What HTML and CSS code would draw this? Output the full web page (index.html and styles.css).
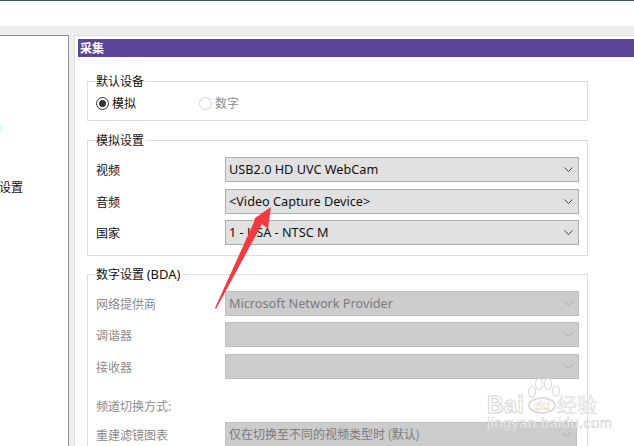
FILE: index.html
```html
<!DOCTYPE html>
<html lang="zh">
<head>
<meta charset="utf-8">
<title>采集</title>
<link rel="stylesheet" href="styles.css">
</head>
<body>
<div class="page">
  <div class="topbar"></div>
  <div class="workspace">
    <aside class="nav">
      <div class="nav-mark"></div>
      <div class="nav-item">设置</div>
    </aside>
    <main class="panel">
      <h1 class="title">采集</h1>
      <fieldset class="group group-device">
        <legend>默认设备</legend>
        <div class="radios">
          <span class="radio-item"><span class="radio checked"></span>模拟</span>
          <span class="radio-item off"><span class="radio"></span>数字</span>
        </div>
      </fieldset>
      <fieldset class="group group-analog">
        <legend>模拟设置</legend>
        <div class="row"><span class="label">视频</span><div class="select">USB2.0 HD UVC WebCam<svg class="chev" viewBox="0 0 9 5"><path d="M.5.5l4 4 4-4"/></svg></div></div>
        <div class="row"><span class="label">音频</span><div class="select">&lt;Video Capture Device&gt;<svg class="chev" viewBox="0 0 9 5"><path d="M.5.5l4 4 4-4"/></svg></div></div>
        <div class="row"><span class="label">国家</span><div class="select">1 - USA - NTSC M<svg class="chev" viewBox="0 0 9 5"><path d="M.5.5l4 4 4-4"/></svg></div></div>
      </fieldset>
      <fieldset class="group group-digital">
        <legend>数字设置 <span class="latin">(BDA)</span></legend>
        <div class="row off"><span class="label">网络提供商</span><div class="select">Microsoft Network Provider<svg class="chev" viewBox="0 0 9 5"><path d="M.5.5l4 4 4-4"/></svg></div></div>
        <div class="row off"><span class="label">调谐器</span><div class="select"><svg class="chev" viewBox="0 0 9 5"><path d="M.5.5l4 4 4-4"/></svg></div></div>
        <div class="row off"><span class="label">接收器</span><div class="select"><svg class="chev" viewBox="0 0 9 5"><path d="M.5.5l4 4 4-4"/></svg></div></div>
        <div class="subhead">频道切换方式:</div>
        <div class="row off last"><span class="label">重建滤镜图表</span><div class="select cjk">仅在切换至不同的视频类型时 (默认)<svg class="chev" viewBox="0 0 9 5"><path d="M.5.5l4 4 4-4"/></svg></div></div>
      </fieldset>
    </main>
  </div>
  <svg class="arrow" viewBox="0 0 634 446"><polygon points="271,207 268,229 262,224 216,309 215,308 254,222 255,218"/></svg>
  <div class="watermark">
    <svg class="paw" viewBox="0 0 34 24"><ellipse cx="5" cy="15" rx="3.5" ry="5"/><ellipse cx="12" cy="7" rx="3.5" ry="5.5"/><ellipse cx="21" cy="7" rx="3.5" ry="5.5"/><ellipse cx="29" cy="14" rx="3.5" ry="5"/></svg>
    <div class="wm-logo"><span class="wm-bai">Bai</span><span class="wm-du">du</span><span class="wm-jy">经验</span></div>
    <div class="wm-url">jingyan.baidu.com</div>
  </div>
</div>
</body>
</html>
```

FILE: styles.css
```css
* { box-sizing: border-box; }
html, body { margin: 0; padding: 0; }
body { background: #fff; font-family: "Noto Sans CJK SC", "Noto Sans", sans-serif; font-size: 12px; color: #111; }
.page { position: relative; width: 634px; height: 446px; overflow: hidden; background: #eee; }
.topbar { height: 26px; background: #fff; border-top: 1px solid #3d5468; }
.workspace { display: flex; height: 420px; padding-top: 9px; gap: 5px; }
.nav { width: 69px; flex: none; background: #fff; border-top: 1px solid #8a8f99; border-right: 1px solid #8a8f99; }
.nav-mark { width: 1px; height: 6px; margin-top: 89px; background: #c4f8f8; }
.nav-item { margin-top: 47px; margin-left: -1px; height: 18px; line-height: 18px; }
.panel { flex: 1; min-width: 0; background: #fff; border-top: 1px solid #ddd; border-left: 1px solid #ddd; padding: 3px 0 0 3px; }
.title { margin: 0 0 16px; height: 18px; padding-left: 2px; line-height: 18px; background: #5c4599; color: #fff; font-size: 12px; font-weight: 700; }
.group { margin: 0 0 10px 9px; width: 501px; padding: 0 8px; border: 1px solid #ddd; min-inline-size: 0; }
.group legend { padding: 0 1px 0 0; margin: 0; line-height: 16px; height: 16px; font-size: 12px; }
.latin { font-family: "Noto Sans", sans-serif; font-size: 13px; }
.radios { display: flex; height: 25px; padding-top: 3px; align-items: center; }
.radio-item { display: inline-flex; align-items: center; gap: 3px; width: 103px; height: 16px; line-height: 16px; }
.radio-item.off { color: #8c8c8c; }
.radio { position: relative; width: 13px; height: 13px; border: 1px solid #d4d4d4; border-radius: 50%; background: #fff; }
.radio.checked { border-color: #333; }
.radio.checked::after { content: ""; position: absolute; left: 2px; top: 2px; width: 7px; height: 7px; border-radius: 50%; background: #333; }
.group-device { height: 48px; margin-bottom: 11px; }
.group-analog { height: 124px; }
.group-digital { height: 200px; }
.row { display: flex; align-items: center; height: 25px; margin-bottom: 7px; }
.group-analog .row:nth-of-type(2) { margin-bottom: 6px; }
.group-digital .row:nth-of-type(1) { margin-bottom: 6px; }
.group legend + .row { margin-top: 9px; }
.label { width: 129px; flex: none; line-height: 16px; }
.select { position: relative; width: 354px; height: 25px; line-height: 22px; padding-left: 3px; background: #e1e1e1; border: 1px solid #adadad; font-family: "Noto Sans", "Noto Sans CJK SC", sans-serif; font-size: 12.7px; white-space: nowrap; overflow: hidden; }
.select.cjk { font-family: "Noto Sans CJK SC", sans-serif; font-size: 12px; }
.chev { position: absolute; right: 5px; top: 9px; width: 9px; height: 5px; fill: none; stroke: #404040; stroke-width: 1; }
.row.off .label, .subhead { color: #8c8c8c; }
.row.off .select { background: #ccc; border-color: #bfbfbf; color: #7a7a7a; }
.row.off .chev { stroke: #a8a8a8; }
.subhead { height: 18px; margin-top: 18px; margin-bottom: 7px; line-height: 18px; }
.row.last .select { width: 352px; }
.arrow { position: absolute; left: 0; top: 0; width: 634px; height: 446px; fill: #f23a40; pointer-events: none; }
.watermark { position: absolute; left: 486px; top: 377px; width: 114px; height: 53px; }
.paw { position: absolute; left: 41px; top: 0; width: 34px; height: 24px; fill: rgba(255,255,255,.75); stroke: #dcdcdc; stroke-width: 1.2; }
.wm-logo { position: absolute; left: 1px; top: 18px; display: flex; align-items: center; height: 20px; line-height: 20px; font-family: "Liberation Sans", sans-serif; font-size: 23px; font-weight: 700; color: rgba(255,255,255,.75); -webkit-text-stroke: 1px #d8d8d8; }
.wm-bai { width: 41px; letter-spacing: .5px; }
.wm-du { width: 28px; height: 17px; line-height: 14px; font-size: 13px; text-align: center; border: 2px solid #dcdcdc; border-radius: 50%; background: rgba(255,255,255,.5); -webkit-text-stroke: .5px #d0d0d0; margin-right: 1px; }
.wm-jy { font-family: "Noto Sans CJK SC", sans-serif; font-size: 20px; font-weight: 400; -webkit-text-stroke: .6px #d8d8d8; }
.wm-url { position: absolute; left: 1px; top: 39px; height: 14px; line-height: 14px; font-family: "Liberation Sans", sans-serif; font-size: 14.5px; letter-spacing: .5px; white-space: nowrap; color: rgba(255,255,255,.8); -webkit-text-stroke: .6px #d4d4d4; }
```
